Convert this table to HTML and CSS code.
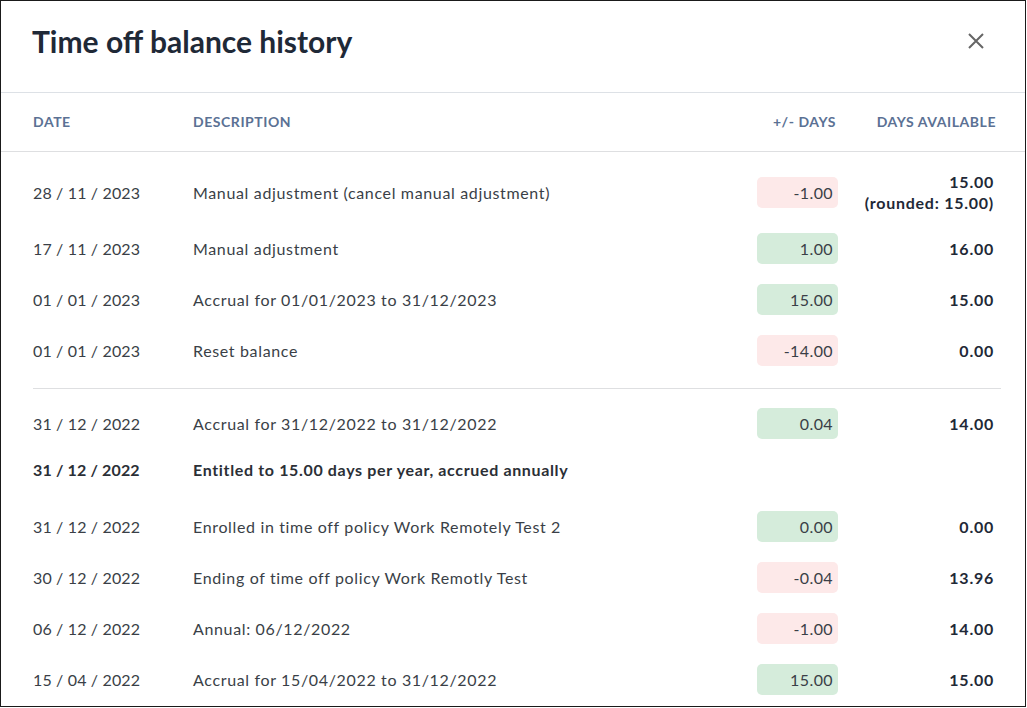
FILE: index.html
```html
<!DOCTYPE html>
<html lang="en">
<head>
<meta charset="utf-8">
<title>Time off balance history</title>
<link rel="stylesheet" href="styles.css">
</head>
<body>
<div class="modal">
  <header class="modal-header">
    <h1 class="modal-title">Time off balance history</h1>
    <button class="close-btn" aria-label="Close">
      <svg width="16" height="16" viewBox="0 0 16 16"><path d="M1 1L15 15M15 1L1 15" stroke="#666" stroke-width="2" fill="none"/></svg>
    </button>
  </header>
  <div class="table-head">
    <div class="th">Date</div>
    <div class="th">Description</div>
    <div class="th th-days">+/- Days</div>
    <div class="th th-avail">Days available</div>
  </div>
  <div class="table-body">
    <div class="row row-tall">
      <div class="cell date">28 / 11 / 2023</div>
      <div class="cell desc">Manual adjustment (cancel manual adjustment)</div>
      <div class="cell days"><span class="pill neg">-1.00</span></div>
      <div class="cell avail">15.00<br>(rounded: 15.00)</div>
    </div>
    <div class="row">
      <div class="cell date">17 / 11 / 2023</div>
      <div class="cell desc">Manual adjustment</div>
      <div class="cell days"><span class="pill pos">1.00</span></div>
      <div class="cell avail">16.00</div>
    </div>
    <div class="row">
      <div class="cell date">01 / 01 / 2023</div>
      <div class="cell desc">Accrual for 01/01/2023 to 31/12/2023</div>
      <div class="cell days"><span class="pill pos">15.00</span></div>
      <div class="cell avail">15.00</div>
    </div>
    <div class="row">
      <div class="cell date">01 / 01 / 2023</div>
      <div class="cell desc">Reset balance</div>
      <div class="cell days"><span class="pill neg">-14.00</span></div>
      <div class="cell avail">0.00</div>
    </div>
    <hr class="group-sep">
    <div class="row">
      <div class="cell date">31 / 12 / 2022</div>
      <div class="cell desc">Accrual for 31/12/2022 to 31/12/2022</div>
      <div class="cell days"><span class="pill pos">0.04</span></div>
      <div class="cell avail">14.00</div>
    </div>
    <div class="row row-policy">
      <div class="cell date">31 / 12 / 2022</div>
      <div class="cell desc">Entitled to 15.00 days per year, accrued annually</div>
      <div class="cell days"></div>
      <div class="cell avail"></div>
    </div>
    <div class="row">
      <div class="cell date">31 / 12 / 2022</div>
      <div class="cell desc">Enrolled in time off policy Work Remotely Test 2</div>
      <div class="cell days"><span class="pill pos">0.00</span></div>
      <div class="cell avail">0.00</div>
    </div>
    <div class="row">
      <div class="cell date">30 / 12 / 2022</div>
      <div class="cell desc">Ending of time off policy Work Remotly Test</div>
      <div class="cell days"><span class="pill neg">-0.04</span></div>
      <div class="cell avail">13.96</div>
    </div>
    <div class="row">
      <div class="cell date">06 / 12 / 2022</div>
      <div class="cell desc">Annual: 06/12/2022</div>
      <div class="cell days"><span class="pill neg">-1.00</span></div>
      <div class="cell avail">14.00</div>
    </div>
    <div class="row">
      <div class="cell date">15 / 04 / 2022</div>
      <div class="cell desc">Accrual for 15/04/2022 to 31/12/2022</div>
      <div class="cell days"><span class="pill pos">15.00</span></div>
      <div class="cell avail">15.00</div>
    </div>
  </div>
</div>
</body>
</html>
```
FILE: styles.css
```css
* { box-sizing: border-box; }
html, body { margin: 0; padding: 0; background: #fff; }
body {
  font-family: Lato, "Open Sans", Arial, sans-serif;
  color: #3a3f47;
}
.modal {
  width: 1026px;
  height: 707px;
  border: 1px solid #1a1a1a;
  overflow: hidden;
  background: #fff;
}
.modal-header {
  height: 92px;
  border-bottom: 1px solid #dde1e6;
  display: flex;
  align-items: center;
  justify-content: space-between;
  padding: 0 41px 0 31px;
}
.modal-title {
  margin: 0;
  font-size: 30px;
  font-weight: 700;
  color: #1f2937;
  padding-bottom: 11px;
}
.close-btn {
  border: 0;
  background: none;
  padding: 0;
  width: 16px;
  height: 16px;
  display: flex;
  margin-bottom: 12px;
}
.table-head {
  display: grid;
  grid-template-columns: 160px 1fr 84px 163px;
  align-items: center;
  height: 59px;
  padding: 0 24px 2px 32px;
  border-bottom: 1px solid #dedfe1;
}
.th {
  font-size: 14px;
  font-weight: 700;
  letter-spacing: 0.55px;
  text-transform: uppercase;
  color: #5b7194;
}
.th-days { text-align: right; padding-right: 2px; }
.th-avail { text-align: right; padding-right: 5px; }
.table-body {
  padding: 9px 24px 0 32px;
}
.row {
  display: grid;
  grid-template-columns: 160px 1fr 84px 163px;
  align-items: center;
  padding: 10px 0;
  font-size: 16px;
  line-height: 21px;
}
.date { letter-spacing: 0.15px; }
.desc { letter-spacing: 0.65px; }
.row-policy {
  padding: 10px 0 21px;
  font-weight: 700;
  color: #2b2f36;
}
.cell.days { display: flex; justify-content: flex-end; }
.cell.avail {
  text-align: right;
  padding-right: 7px;
  font-weight: 700;
  letter-spacing: 0.75px;
  color: #1f2937;
}
.pill {
  display: block;
  width: 81px;
  height: 31px;
  line-height: 31px;
  border-radius: 5px;
  text-align: right;
  padding-right: 5px;
  letter-spacing: 0.4px;
  color: #3a3f47;
}
.pill.pos { background: #d5ecdb; }
.pill.neg { background: #fde9e9; }
.group-sep {
  border: 0;
  border-top: 1px solid #dedfe1;
  margin: 12px 0 9px;
  height: 0;
}
```
